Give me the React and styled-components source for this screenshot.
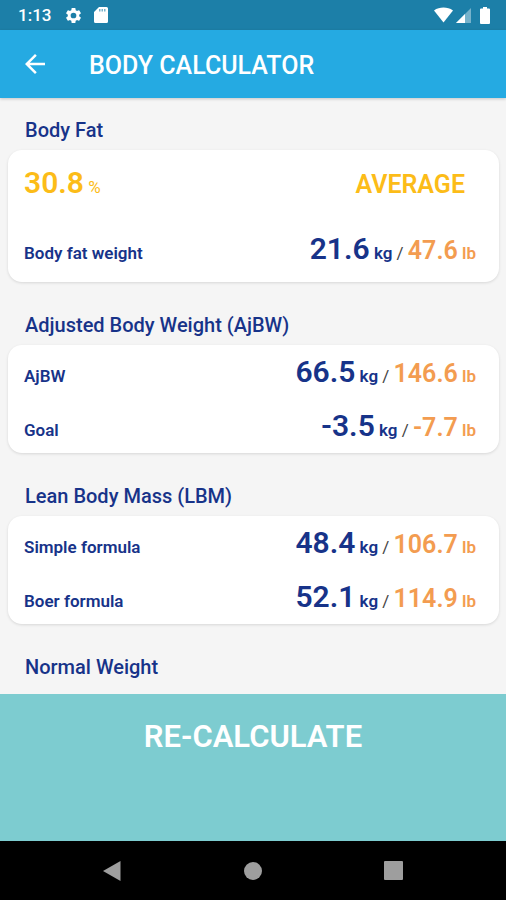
import React from 'react';
import styled, { createGlobalStyle, ThemeProvider } from 'styled-components';

const theme = {
  colors: {
    statusBar: '#1c7fa8',
    appBar: '#25aae2',
    background: '#f5f5f5',
    card: '#ffffff',
    primary: '#173389',
    pound: '#f39c50',
    level: '#fcbc18',
    action: '#7dccd0',
    navIcon: '#9e9e9e',
  },
};

const GlobalStyle = createGlobalStyle`
  * {
    box-sizing: border-box;
  }
  body {
    margin: 0;
    font-family: Roboto, 'Liberation Sans', sans-serif;
    background-color: #f5f5f5;
  }
`;

const Screen = styled.div`
  display: flex;
  flex-direction: column;
  height: 100vh;
  background-color: ${({ theme }) => theme.colors.background};
`;

const StatusBar = styled.div`
  display: flex;
  justify-content: space-between;
  align-items: center;
  flex-shrink: 0;
  height: 30px;
  padding: 0 16px 0 18px;
  color: #fff;
  background-color: ${({ theme }) => theme.colors.statusBar};
`;

const StatusGroup = styled.div`
  display: flex;
  align-items: center;
  gap: ${({ $gap }) => $gap}px;

  svg {
    display: block;
  }
`;

const Clock = styled.span`
  font-size: 17px;
  font-weight: 500;
  line-height: 30px;
`;

const AppBar = styled.header`
  display: flex;
  align-items: center;
  flex-shrink: 0;
  gap: 39px;
  height: 68px;
  padding: 0 20px;
  color: #fff;
  background-color: ${({ theme }) => theme.colors.appBar};
  box-shadow: 0 1px 3px rgba(0, 0, 0, 0.2);
`;

const BackBtn = styled.button`
  display: flex;
  padding: 0;
  border: 0;
  color: inherit;
  background-color: transparent;
  cursor: pointer;
`;

const Title = styled.h1`
  margin: 0;
  padding-top: 3px;
  font-size: 25px;
  font-weight: 500;
  line-height: 32px;
`;

const Results = styled.main`
  display: flex;
  flex-direction: column;
  flex: 1;
  gap: 31px;
  min-height: 0;
  padding: 20px 7px 0 8px;
  overflow: hidden;
`;

const Heading = styled.h2`
  margin: 0 0 8px;
  padding: 0 17px;
  color: ${({ theme }) => theme.colors.primary};
  font-size: 20px;
  font-weight: 500;
  line-height: 24px;
`;

const Card = styled.dl`
  margin: 0;
  padding: ${({ $summary }) => ($summary ? '6px 0' : '0')};
  border-radius: 14px;
  background-color: ${({ theme }) => theme.colors.card};
  box-shadow: 0 1px 3px rgba(0, 0, 0, 0.12);
`;

const Row = styled.div`
  display: flex;
  justify-content: space-between;
  align-items: baseline;
  height: 54px;
  padding: 8px 23px 0 16px;
  line-height: 38px;
`;

const SummaryRow = styled(Row)`
  margin-bottom: 12px;
  padding-right: 34px;
  color: ${({ theme }) => theme.colors.level};
`;

const Label = styled.dt`
  color: ${({ theme }) => theme.colors.primary};
  font-size: 17px;
  font-weight: 600;
`;

const Percent = styled.dt`
  font-size: 17px;
`;

const Level = styled.dd`
  margin: 0;
  font-size: 25px;
  font-weight: 600;
`;

const Value = styled.dd`
  margin: 0;
  color: #444;
  font-size: 17px;
`;

const Big = styled.span`
  font-size: 30px;
  font-weight: 600;
`;

const Kilo = styled.span`
  color: ${({ theme }) => theme.colors.primary};
  font-weight: 600;
`;

const Pound = styled.span`
  color: ${({ theme }) => theme.colors.pound};
  font-weight: 600;
`;

const PoundNumber = styled.span`
  font-size: 25px;
`;

const RecalculateBtn = styled.button`
  flex-shrink: 0;
  height: 147px;
  padding: 0 0 62px;
  border: 0;
  color: #fff;
  background-color: ${({ theme }) => theme.colors.action};
  font-family: inherit;
  font-size: 31px;
  font-weight: 600;
  cursor: pointer;
`;

const NavBar = styled.nav`
  display: flex;
  flex-shrink: 0;
  height: 59px;
  padding: 0 42px;
  background-color: #000;
`;

const NavBtn = styled.button`
  display: flex;
  flex: 1;
  justify-content: center;
  align-items: center;
  padding: 0;
  border: 0;
  background-color: transparent;
  fill: ${({ theme }) => theme.colors.navIcon};
  cursor: pointer;
`;

const Weight = ({ label, kg, lb }) => (
  <Row>
    <Label>{label}</Label>
    <Value>
      <Kilo>
        <Big>{kg}</Big> kg
      </Kilo>{' '}
      /{' '}
      <Pound>
        <PoundNumber>{lb}</PoundNumber> lb
      </Pound>
    </Value>
  </Row>
);

const App = () => {
  return (
    <ThemeProvider theme={theme}>
      <GlobalStyle />
      <Screen>
        <StatusBar>
          <StatusGroup $gap={13}>
            <Clock>1:13</Clock>
            <StatusGroup $gap={11}>
              <svg width='19' height='19' viewBox='0 0 24 24' fill='#fff'>
                <path d='M19.14 12.94c.04-.3.06-.61.06-.94 0-.32-.02-.64-.07-.94l2.03-1.58a.49.49 0 0 0 .12-.61l-1.92-3.32a.49.49 0 0 0-.59-.22l-2.39.96c-.5-.38-1.03-.7-1.62-.94l-.36-2.54a.48.48 0 0 0-.48-.41h-3.84a.48.48 0 0 0-.47.41l-.36 2.54c-.59.24-1.13.57-1.62.94l-2.39-.96a.48.48 0 0 0-.59.22L2.74 8.87a.48.48 0 0 0 .12.61l2.03 1.58c-.05.3-.09.63-.09.94s.02.64.07.94l-2.03 1.58a.49.49 0 0 0-.12.61l1.92 3.32c.12.22.37.29.59.22l2.39-.96c.5.38 1.03.7 1.62.94l.36 2.54c.05.24.24.41.48.41h3.84c.24 0 .44-.17.47-.41l.36-2.54c.59-.24 1.13-.56 1.62-.94l2.39.96c.22.08.47 0 .59-.22l1.92-3.32a.48.48 0 0 0-.12-.61zM12 15.6a3.6 3.6 0 1 1 0-7.2 3.6 3.6 0 0 1 0 7.2z' />
              </svg>
              <svg width='14' height='16' viewBox='0 0 14 16'>
                <path
                  d='M5 0h7.500a1.500 1.500 0 0 1 1.500 1.500v13a1.500 1.500 0 0 1-1.500 1.500h-11A1.500 1.500 0 0 1 0 14.500V5z'
                  fill='#fff'
                />
                <path d='M5 2h1.500v2.500H5zM7.500 2H9v2.500H7.500zM10 2h1.500v2.500H10z' fill='#1c7fa8' opacity='.6' />
              </svg>
            </StatusGroup>
          </StatusGroup>
          <StatusGroup $gap={9}>
            <StatusGroup $gap={3}>
              <svg width='19' height='16' viewBox='0 0 20 16' fill='#fff'>
                <path d='M0 3.200C6-.8 14-.8 20 3.200L10 16z' />
              </svg>
              <svg width='15' height='15' viewBox='0 0 15 15' fill='#fff'>
                <path d='M15 0v15H0z' opacity='.4' />
                <path d='M9 6v9H0z' />
              </svg>
            </StatusGroup>
            <svg width='10' height='17' viewBox='0 0 10 17' fill='#fff'>
              <path d='M3 0h4v1.500h2a1 1 0 0 1 1 1V16a1 1 0 0 1-1 1H1a1 1 0 0 1-1-1V2.500a1 1 0 0 1 1-1h2z' />
            </svg>
          </StatusGroup>
        </StatusBar>
        <AppBar>
          <BackBtn aria-label='Back'>
            <svg width='30' height='30' viewBox='0 0 24 24' fill='currentColor'>
              <path d='M20 11H7.830l5.590-5.590L12 4l-8 8 8 8 1.410-1.410L7.830 13H20z' />
            </svg>
          </BackBtn>
          <Title>BODY CALCULATOR</Title>
        </AppBar>
        <Results>
          <section>
            <Heading>Body Fat</Heading>
            <Card $summary>
              <SummaryRow>
                <Percent>
                  <Big>30.8</Big> %
                </Percent>
                <Level>AVERAGE</Level>
              </SummaryRow>
              <Weight label='Body fat weight' kg='21.6' lb='47.6' />
            </Card>
          </section>
          <section>
            <Heading>Adjusted Body Weight (AjBW)</Heading>
            <Card>
              <Weight label='AjBW' kg='66.5' lb='146.6' />
              <Weight label='Goal' kg='-3.5' lb='-7.7' />
            </Card>
          </section>
          <section>
            <Heading>Lean Body Mass (LBM)</Heading>
            <Card>
              <Weight label='Simple formula' kg='48.4' lb='106.7' />
              <Weight label='Boer formula' kg='52.1' lb='114.9' />
            </Card>
          </section>
          <section>
            <Heading>Normal Weight</Heading>
          </section>
        </Results>
        <RecalculateBtn>RE-CALCULATE</RecalculateBtn>
        <NavBar>
          <NavBtn aria-label='Back'>
            <svg width='20' height='22' viewBox='0 0 20 22'>
              <path d='M18.500 1v20L1 11z' />
            </svg>
          </NavBtn>
          <NavBtn aria-label='Home'>
            <svg width='18' height='18' viewBox='0 0 18 18'>
              <circle cx='9' cy='9' r='9' />
            </svg>
          </NavBtn>
          <NavBtn aria-label='Recent apps'>
            <svg width='20' height='20' viewBox='0 0 20 20'>
              <rect width='19' height='19' rx='1' />
            </svg>
          </NavBtn>
        </NavBar>
      </Screen>
    </ThemeProvider>
  );
};

export default App;
